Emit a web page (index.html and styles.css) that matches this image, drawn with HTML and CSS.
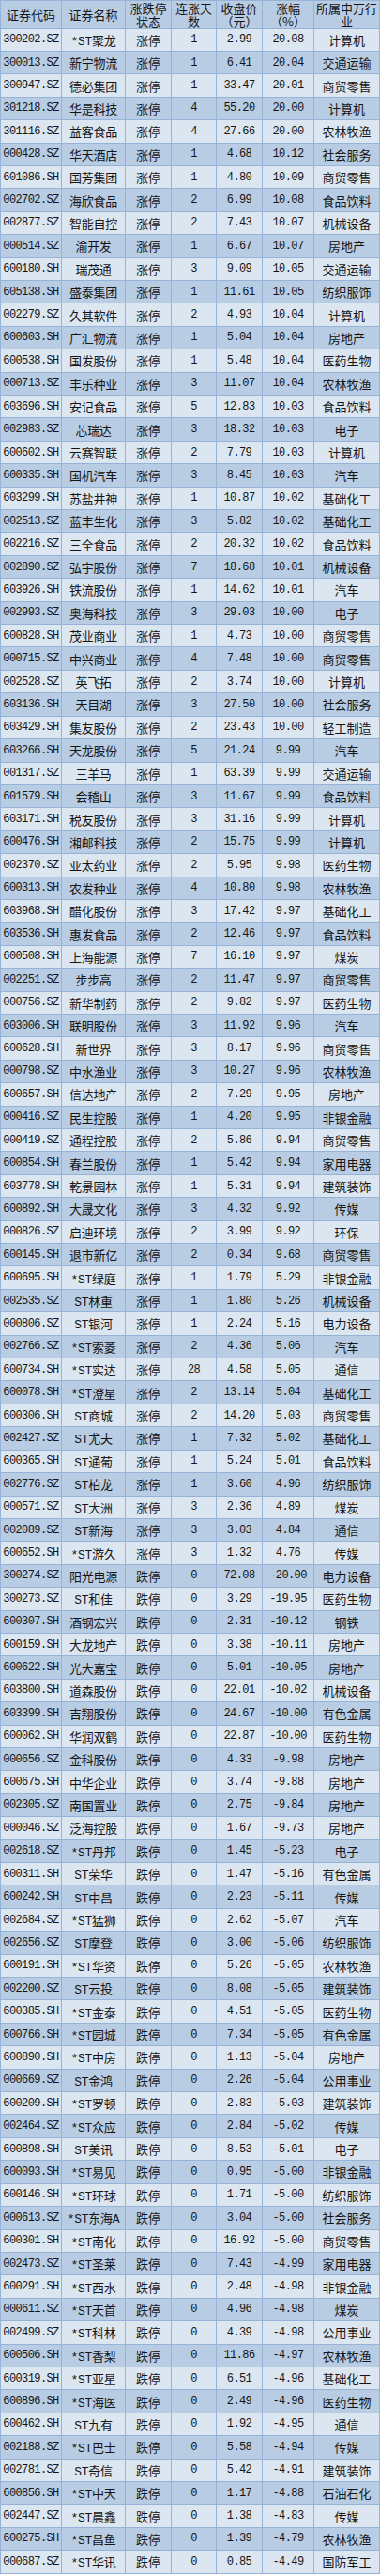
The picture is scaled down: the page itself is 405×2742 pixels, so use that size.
FILE: index.html
```html
<!DOCTYPE html>
<html lang="zh-CN">
<head>
<meta charset="utf-8">
<title>涨跌停个股</title>
<link rel="stylesheet" href="styles.css">
</head>
<body>
<div class="sheet">
<div class="row head"><span>证券代码</span><span>证券名称</span><span>涨跌停<br>状态</span><span>连涨天<br>数</span><span>收盘价<br>（元）</span><span>涨幅<br>（%）</span><span>所属申万行<br>业</span></div>
<div class="row"><span>300202.SZ</span><span>*ST聚龙</span><span>涨停</span><span>1</span><span>2.99</span><span>20.08</span><span>计算机</span></div>
<div class="row"><span>300013.SZ</span><span>新宁物流</span><span>涨停</span><span>1</span><span>6.41</span><span>20.04</span><span>交通运输</span></div>
<div class="row"><span>300947.SZ</span><span>德必集团</span><span>涨停</span><span>1</span><span>33.47</span><span>20.01</span><span>商贸零售</span></div>
<div class="row"><span>301218.SZ</span><span>华是科技</span><span>涨停</span><span>4</span><span>55.20</span><span>20.00</span><span>计算机</span></div>
<div class="row"><span>301116.SZ</span><span>益客食品</span><span>涨停</span><span>4</span><span>27.66</span><span>20.00</span><span>农林牧渔</span></div>
<div class="row"><span>000428.SZ</span><span>华天酒店</span><span>涨停</span><span>1</span><span>4.68</span><span>10.12</span><span>社会服务</span></div>
<div class="row"><span>601086.SH</span><span>国芳集团</span><span>涨停</span><span>1</span><span>4.80</span><span>10.09</span><span>商贸零售</span></div>
<div class="row"><span>002702.SZ</span><span>海欣食品</span><span>涨停</span><span>2</span><span>6.99</span><span>10.08</span><span>食品饮料</span></div>
<div class="row"><span>002877.SZ</span><span>智能自控</span><span>涨停</span><span>2</span><span>7.43</span><span>10.07</span><span>机械设备</span></div>
<div class="row"><span>000514.SZ</span><span>渝开发</span><span>涨停</span><span>1</span><span>6.67</span><span>10.07</span><span>房地产</span></div>
<div class="row"><span>600180.SH</span><span>瑞茂通</span><span>涨停</span><span>3</span><span>9.09</span><span>10.05</span><span>交通运输</span></div>
<div class="row"><span>605138.SH</span><span>盛泰集团</span><span>涨停</span><span>1</span><span>11.61</span><span>10.05</span><span>纺织服饰</span></div>
<div class="row"><span>002279.SZ</span><span>久其软件</span><span>涨停</span><span>2</span><span>4.93</span><span>10.04</span><span>计算机</span></div>
<div class="row"><span>600603.SH</span><span>广汇物流</span><span>涨停</span><span>1</span><span>5.04</span><span>10.04</span><span>房地产</span></div>
<div class="row"><span>600538.SH</span><span>国发股份</span><span>涨停</span><span>1</span><span>5.48</span><span>10.04</span><span>医药生物</span></div>
<div class="row"><span>000713.SZ</span><span>丰乐种业</span><span>涨停</span><span>3</span><span>11.07</span><span>10.04</span><span>农林牧渔</span></div>
<div class="row"><span>603696.SH</span><span>安记食品</span><span>涨停</span><span>5</span><span>12.83</span><span>10.03</span><span>食品饮料</span></div>
<div class="row"><span>002983.SZ</span><span>芯瑞达</span><span>涨停</span><span>3</span><span>18.32</span><span>10.03</span><span>电子</span></div>
<div class="row"><span>600602.SH</span><span>云赛智联</span><span>涨停</span><span>2</span><span>7.79</span><span>10.03</span><span>计算机</span></div>
<div class="row"><span>600335.SH</span><span>国机汽车</span><span>涨停</span><span>3</span><span>8.45</span><span>10.03</span><span>汽车</span></div>
<div class="row"><span>603299.SH</span><span>苏盐井神</span><span>涨停</span><span>1</span><span>10.87</span><span>10.02</span><span>基础化工</span></div>
<div class="row"><span>002513.SZ</span><span>蓝丰生化</span><span>涨停</span><span>3</span><span>5.82</span><span>10.02</span><span>基础化工</span></div>
<div class="row"><span>002216.SZ</span><span>三全食品</span><span>涨停</span><span>2</span><span>20.32</span><span>10.02</span><span>食品饮料</span></div>
<div class="row"><span>002890.SZ</span><span>弘宇股份</span><span>涨停</span><span>7</span><span>18.68</span><span>10.01</span><span>机械设备</span></div>
<div class="row"><span>603926.SH</span><span>铁流股份</span><span>涨停</span><span>1</span><span>14.62</span><span>10.01</span><span>汽车</span></div>
<div class="row"><span>002993.SZ</span><span>奥海科技</span><span>涨停</span><span>3</span><span>29.03</span><span>10.00</span><span>电子</span></div>
<div class="row"><span>600828.SH</span><span>茂业商业</span><span>涨停</span><span>1</span><span>4.73</span><span>10.00</span><span>商贸零售</span></div>
<div class="row"><span>000715.SZ</span><span>中兴商业</span><span>涨停</span><span>4</span><span>7.48</span><span>10.00</span><span>商贸零售</span></div>
<div class="row"><span>002528.SZ</span><span>英飞拓</span><span>涨停</span><span>2</span><span>3.74</span><span>10.00</span><span>计算机</span></div>
<div class="row"><span>603136.SH</span><span>天目湖</span><span>涨停</span><span>3</span><span>27.50</span><span>10.00</span><span>社会服务</span></div>
<div class="row"><span>603429.SH</span><span>集友股份</span><span>涨停</span><span>2</span><span>23.43</span><span>10.00</span><span>轻工制造</span></div>
<div class="row"><span>603266.SH</span><span>天龙股份</span><span>涨停</span><span>5</span><span>21.24</span><span>9.99</span><span>汽车</span></div>
<div class="row"><span>001317.SZ</span><span>三羊马</span><span>涨停</span><span>1</span><span>63.39</span><span>9.99</span><span>交通运输</span></div>
<div class="row"><span>601579.SH</span><span>会稽山</span><span>涨停</span><span>3</span><span>11.67</span><span>9.99</span><span>食品饮料</span></div>
<div class="row"><span>603171.SH</span><span>税友股份</span><span>涨停</span><span>3</span><span>31.16</span><span>9.99</span><span>计算机</span></div>
<div class="row"><span>600476.SH</span><span>湘邮科技</span><span>涨停</span><span>2</span><span>15.75</span><span>9.99</span><span>计算机</span></div>
<div class="row"><span>002370.SZ</span><span>亚太药业</span><span>涨停</span><span>2</span><span>5.95</span><span>9.98</span><span>医药生物</span></div>
<div class="row"><span>600313.SH</span><span>农发种业</span><span>涨停</span><span>4</span><span>10.80</span><span>9.98</span><span>农林牧渔</span></div>
<div class="row"><span>603968.SH</span><span>醋化股份</span><span>涨停</span><span>3</span><span>17.42</span><span>9.97</span><span>基础化工</span></div>
<div class="row"><span>603536.SH</span><span>惠发食品</span><span>涨停</span><span>2</span><span>12.46</span><span>9.97</span><span>食品饮料</span></div>
<div class="row"><span>600508.SH</span><span>上海能源</span><span>涨停</span><span>7</span><span>16.10</span><span>9.97</span><span>煤炭</span></div>
<div class="row"><span>002251.SZ</span><span>步步高</span><span>涨停</span><span>2</span><span>11.47</span><span>9.97</span><span>商贸零售</span></div>
<div class="row"><span>000756.SZ</span><span>新华制药</span><span>涨停</span><span>2</span><span>9.82</span><span>9.97</span><span>医药生物</span></div>
<div class="row"><span>603006.SH</span><span>联明股份</span><span>涨停</span><span>3</span><span>11.92</span><span>9.96</span><span>汽车</span></div>
<div class="row"><span>600628.SH</span><span>新世界</span><span>涨停</span><span>3</span><span>8.17</span><span>9.96</span><span>商贸零售</span></div>
<div class="row"><span>000798.SZ</span><span>中水渔业</span><span>涨停</span><span>3</span><span>10.27</span><span>9.96</span><span>农林牧渔</span></div>
<div class="row"><span>600657.SH</span><span>信达地产</span><span>涨停</span><span>2</span><span>7.29</span><span>9.95</span><span>房地产</span></div>
<div class="row"><span>000416.SZ</span><span>民生控股</span><span>涨停</span><span>1</span><span>4.20</span><span>9.95</span><span>非银金融</span></div>
<div class="row"><span>000419.SZ</span><span>通程控股</span><span>涨停</span><span>2</span><span>5.86</span><span>9.94</span><span>商贸零售</span></div>
<div class="row"><span>600854.SH</span><span>春兰股份</span><span>涨停</span><span>1</span><span>5.42</span><span>9.94</span><span>家用电器</span></div>
<div class="row"><span>603778.SH</span><span>乾景园林</span><span>涨停</span><span>1</span><span>5.31</span><span>9.94</span><span>建筑装饰</span></div>
<div class="row"><span>600892.SH</span><span>大晟文化</span><span>涨停</span><span>3</span><span>4.32</span><span>9.92</span><span>传媒</span></div>
<div class="row"><span>000826.SZ</span><span>启迪环境</span><span>涨停</span><span>2</span><span>3.99</span><span>9.92</span><span>环保</span></div>
<div class="row"><span>600145.SH</span><span>退市新亿</span><span>涨停</span><span>2</span><span>0.34</span><span>9.68</span><span>商贸零售</span></div>
<div class="row"><span>600695.SH</span><span>*ST绿庭</span><span>涨停</span><span>1</span><span>1.79</span><span>5.29</span><span>非银金融</span></div>
<div class="row"><span>002535.SZ</span><span>ST林重</span><span>涨停</span><span>1</span><span>1.80</span><span>5.26</span><span>机械设备</span></div>
<div class="row"><span>000806.SZ</span><span>ST银河</span><span>涨停</span><span>1</span><span>2.24</span><span>5.16</span><span>电力设备</span></div>
<div class="row"><span>002766.SZ</span><span>*ST索菱</span><span>涨停</span><span>2</span><span>4.36</span><span>5.06</span><span>汽车</span></div>
<div class="row"><span>600734.SH</span><span>*ST实达</span><span>涨停</span><span>28</span><span>4.58</span><span>5.05</span><span>通信</span></div>
<div class="row"><span>600078.SH</span><span>*ST澄星</span><span>涨停</span><span>2</span><span>13.14</span><span>5.04</span><span>基础化工</span></div>
<div class="row"><span>600306.SH</span><span>ST商城</span><span>涨停</span><span>2</span><span>14.20</span><span>5.03</span><span>商贸零售</span></div>
<div class="row"><span>002427.SZ</span><span>ST尤夫</span><span>涨停</span><span>1</span><span>7.32</span><span>5.02</span><span>基础化工</span></div>
<div class="row"><span>600365.SH</span><span>ST通葡</span><span>涨停</span><span>1</span><span>5.24</span><span>5.01</span><span>食品饮料</span></div>
<div class="row"><span>002776.SZ</span><span>ST柏龙</span><span>涨停</span><span>1</span><span>3.60</span><span>4.96</span><span>纺织服饰</span></div>
<div class="row"><span>000571.SZ</span><span>ST大洲</span><span>涨停</span><span>3</span><span>2.36</span><span>4.89</span><span>煤炭</span></div>
<div class="row"><span>002089.SZ</span><span>ST新海</span><span>涨停</span><span>3</span><span>3.03</span><span>4.84</span><span>通信</span></div>
<div class="row"><span>600652.SH</span><span>*ST游久</span><span>涨停</span><span>3</span><span>1.32</span><span>4.76</span><span>传媒</span></div>
<div class="row"><span>300274.SZ</span><span>阳光电源</span><span>跌停</span><span>0</span><span>72.08</span><span>-20.00</span><span>电力设备</span></div>
<div class="row"><span>300273.SZ</span><span>ST和佳</span><span>跌停</span><span>0</span><span>3.29</span><span>-19.95</span><span>医药生物</span></div>
<div class="row"><span>600307.SH</span><span>酒钢宏兴</span><span>跌停</span><span>0</span><span>2.31</span><span>-10.12</span><span>钢铁</span></div>
<div class="row"><span>600159.SH</span><span>大龙地产</span><span>跌停</span><span>0</span><span>3.38</span><span>-10.11</span><span>房地产</span></div>
<div class="row"><span>600622.SH</span><span>光大嘉宝</span><span>跌停</span><span>0</span><span>5.01</span><span>-10.05</span><span>房地产</span></div>
<div class="row"><span>603800.SH</span><span>道森股份</span><span>跌停</span><span>0</span><span>22.01</span><span>-10.02</span><span>机械设备</span></div>
<div class="row"><span>603399.SH</span><span>吉翔股份</span><span>跌停</span><span>0</span><span>24.67</span><span>-10.00</span><span>有色金属</span></div>
<div class="row"><span>600062.SH</span><span>华润双鹤</span><span>跌停</span><span>0</span><span>22.87</span><span>-10.00</span><span>医药生物</span></div>
<div class="row"><span>000656.SZ</span><span>金科股份</span><span>跌停</span><span>0</span><span>4.33</span><span>-9.98</span><span>房地产</span></div>
<div class="row"><span>600675.SH</span><span>中华企业</span><span>跌停</span><span>0</span><span>3.74</span><span>-9.88</span><span>房地产</span></div>
<div class="row"><span>002305.SZ</span><span>南国置业</span><span>跌停</span><span>0</span><span>2.75</span><span>-9.84</span><span>房地产</span></div>
<div class="row"><span>000046.SZ</span><span>泛海控股</span><span>跌停</span><span>0</span><span>1.67</span><span>-9.73</span><span>房地产</span></div>
<div class="row"><span>002618.SZ</span><span>*ST丹邦</span><span>跌停</span><span>0</span><span>1.45</span><span>-5.23</span><span>电子</span></div>
<div class="row"><span>600311.SH</span><span>ST荣华</span><span>跌停</span><span>0</span><span>1.47</span><span>-5.16</span><span>有色金属</span></div>
<div class="row"><span>600242.SH</span><span>ST中昌</span><span>跌停</span><span>0</span><span>2.23</span><span>-5.11</span><span>传媒</span></div>
<div class="row"><span>002684.SZ</span><span>*ST猛狮</span><span>跌停</span><span>0</span><span>2.62</span><span>-5.07</span><span>汽车</span></div>
<div class="row"><span>002656.SZ</span><span>ST摩登</span><span>跌停</span><span>0</span><span>3.00</span><span>-5.06</span><span>纺织服饰</span></div>
<div class="row"><span>600191.SH</span><span>*ST华资</span><span>跌停</span><span>0</span><span>5.26</span><span>-5.05</span><span>农林牧渔</span></div>
<div class="row"><span>002200.SZ</span><span>ST云投</span><span>跌停</span><span>0</span><span>8.08</span><span>-5.05</span><span>建筑装饰</span></div>
<div class="row"><span>600385.SH</span><span>*ST金泰</span><span>跌停</span><span>0</span><span>4.51</span><span>-5.05</span><span>医药生物</span></div>
<div class="row"><span>600766.SH</span><span>*ST园城</span><span>跌停</span><span>0</span><span>7.34</span><span>-5.05</span><span>有色金属</span></div>
<div class="row"><span>600890.SH</span><span>*ST中房</span><span>跌停</span><span>0</span><span>1.13</span><span>-5.04</span><span>房地产</span></div>
<div class="row"><span>000669.SZ</span><span>ST金鸿</span><span>跌停</span><span>0</span><span>2.26</span><span>-5.04</span><span>公用事业</span></div>
<div class="row"><span>600209.SH</span><span>*ST罗顿</span><span>跌停</span><span>0</span><span>2.83</span><span>-5.03</span><span>建筑装饰</span></div>
<div class="row"><span>002464.SZ</span><span>*ST众应</span><span>跌停</span><span>0</span><span>2.84</span><span>-5.02</span><span>传媒</span></div>
<div class="row"><span>600898.SH</span><span>ST美讯</span><span>跌停</span><span>0</span><span>8.53</span><span>-5.01</span><span>电子</span></div>
<div class="row"><span>600093.SH</span><span>*ST易见</span><span>跌停</span><span>0</span><span>0.95</span><span>-5.00</span><span>非银金融</span></div>
<div class="row"><span>600146.SH</span><span>*ST环球</span><span>跌停</span><span>0</span><span>1.71</span><span>-5.00</span><span>纺织服饰</span></div>
<div class="row"><span>000613.SZ</span><span>*ST东海A</span><span>跌停</span><span>0</span><span>3.04</span><span>-5.00</span><span>社会服务</span></div>
<div class="row"><span>600301.SH</span><span>*ST南化</span><span>跌停</span><span>0</span><span>16.92</span><span>-5.00</span><span>商贸零售</span></div>
<div class="row"><span>002473.SZ</span><span>*ST圣莱</span><span>跌停</span><span>0</span><span>7.43</span><span>-4.99</span><span>家用电器</span></div>
<div class="row"><span>600291.SH</span><span>*ST西水</span><span>跌停</span><span>0</span><span>2.48</span><span>-4.98</span><span>非银金融</span></div>
<div class="row"><span>000611.SZ</span><span>*ST天首</span><span>跌停</span><span>0</span><span>4.96</span><span>-4.98</span><span>煤炭</span></div>
<div class="row"><span>002499.SZ</span><span>*ST科林</span><span>跌停</span><span>0</span><span>4.39</span><span>-4.98</span><span>公用事业</span></div>
<div class="row"><span>600506.SH</span><span>*ST香梨</span><span>跌停</span><span>0</span><span>11.86</span><span>-4.97</span><span>农林牧渔</span></div>
<div class="row"><span>600319.SH</span><span>*ST亚星</span><span>跌停</span><span>0</span><span>6.51</span><span>-4.96</span><span>基础化工</span></div>
<div class="row"><span>600896.SH</span><span>*ST海医</span><span>跌停</span><span>0</span><span>2.49</span><span>-4.96</span><span>医药生物</span></div>
<div class="row"><span>600462.SH</span><span>ST九有</span><span>跌停</span><span>0</span><span>1.92</span><span>-4.95</span><span>通信</span></div>
<div class="row"><span>002188.SZ</span><span>*ST巴士</span><span>跌停</span><span>0</span><span>5.58</span><span>-4.94</span><span>传媒</span></div>
<div class="row"><span>002781.SZ</span><span>ST奇信</span><span>跌停</span><span>0</span><span>5.42</span><span>-4.91</span><span>建筑装饰</span></div>
<div class="row"><span>600856.SH</span><span>*ST中天</span><span>跌停</span><span>0</span><span>1.17</span><span>-4.88</span><span>石油石化</span></div>
<div class="row"><span>002447.SZ</span><span>*ST晨鑫</span><span>跌停</span><span>0</span><span>1.38</span><span>-4.83</span><span>传媒</span></div>
<div class="row"><span>600275.SH</span><span>*ST昌鱼</span><span>跌停</span><span>0</span><span>1.39</span><span>-4.79</span><span>农林牧渔</span></div>
<div class="row"><span>000687.SZ</span><span>*ST华讯</span><span>跌停</span><span>0</span><span>0.85</span><span>-4.49</span><span>国防军工</span></div>
</div>
</body>
</html>
```

FILE: styles.css
```css
html, body {
  margin: 0;
  padding: 0;
  background: #ffffff;
}

.sheet {
  width: 404px;
  border-top: 1px solid #95b3d7;
  border-left: 1px solid #95b3d7;
  font-family: "Noto Sans CJK SC", sans-serif;
  font-size: 13px;
  color: #141414;
}

.row {
  display: grid;
  grid-template-columns: 65px 68px 49px 48px 49px 55px 70px;
  height: 24.41px;
  background: #dce6f1;
}

.row:nth-child(odd) {
  background: #b8cce4;
}

.row.head {
  height: 29.5px;
  background: #b8cce4;
}

.row > span {
  box-sizing: border-box;
  display: flex;
  align-items: center;
  justify-content: center;
  text-align: center;
  border-right: 1px solid #95b3d7;
  border-bottom: 1px solid #95b3d7;
  white-space: nowrap;
  overflow: hidden;
}

.row.head > span {
  line-height: 14px;
  overflow: visible;
  padding-top: 1px;
}

.row:not(.head) > span:nth-child(1),
.row:not(.head) > span:nth-child(4),
.row:not(.head) > span:nth-child(5),
.row:not(.head) > span:nth-child(6) {
  font-family: "Liberation Mono", monospace;
  font-size: 12px;
  letter-spacing: -0.6px;
}

.row:not(.head) > span:nth-child(2) {
  font-family: "Liberation Mono", "Noto Sans CJK SC", monospace;
  letter-spacing: -0.3px;
}
```
